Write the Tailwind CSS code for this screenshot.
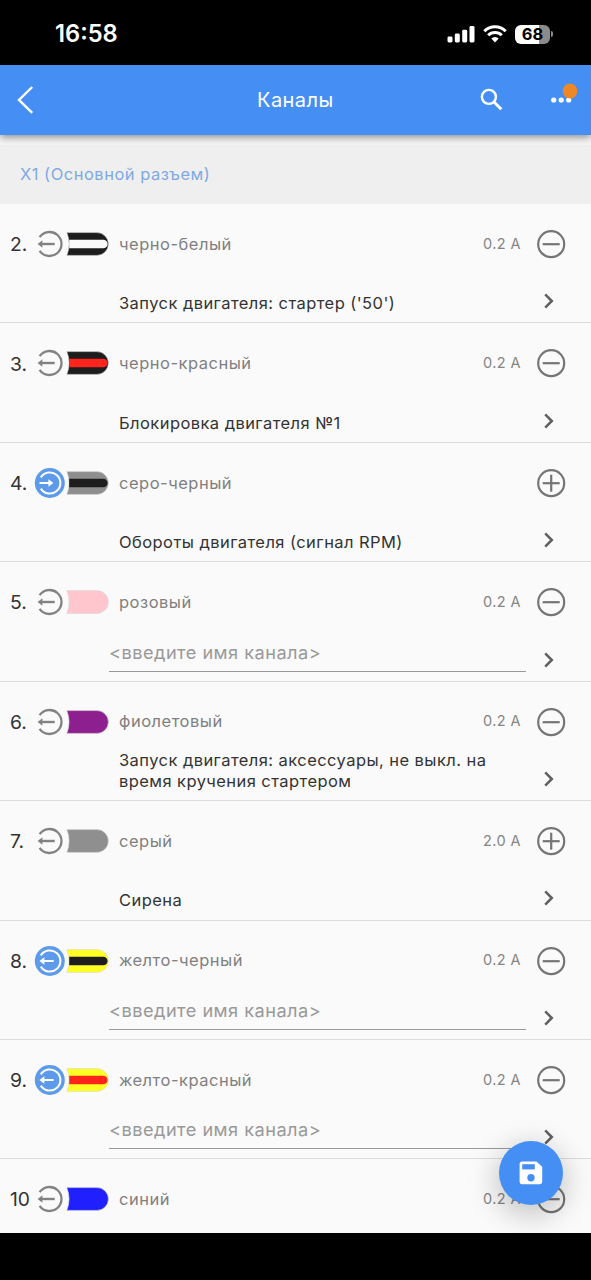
<!DOCTYPE html>
<html lang="ru">
<head>
<meta charset="utf-8">
<title>Каналы</title>
<script src="https://cdn.jsdelivr.net/npm/@tailwindcss/browser@4"></script>
</head>
<body class="w-[591px] h-[1280px] overflow-hidden bg-black font-['Inter',sans-serif]">
<div class="relative flex flex-col w-[591px] h-[1280px]">
  <div class="h-[65px] shrink-0 bg-black text-white flex items-center pt-[3px] pl-[55px] pr-[38px]">
    <span class="text-[23.7px] font-semibold leading-none">16:58</span>
    <div class="ml-auto flex items-center">
      <svg class="w-[28px] h-[18px]" viewBox="0 0 28 18" fill="#fff"><rect x="0.5" y="11.5" width="5" height="6" rx="1.4"/><rect x="7.8" y="8.5" width="5" height="9" rx="1.4"/><rect x="15.2" y="4.8" width="5" height="12.7" rx="1.4"/><rect x="22.5" y="1" width="5" height="16.5" rx="1.4"/></svg>
      <svg class="w-[24px] h-[18px] ml-[8px]" viewBox="0 0 24 18" fill="none" stroke="#fff" stroke-width="3"><path d="M1.3 6.2a15 15 0 0 1 21.4 0M5.2 10.2a9.6 9.6 0 0 1 13.6 0"/><path d="M12 17.4l-3.7-3.8a5.3 5.3 0 0 1 7.4 0z" fill="#fff" stroke="none"/></svg>
      <div class="ml-[8px] w-[35px] h-[19px] rounded-[6px] flex items-center justify-center bg-linear-to-r from-white from-68% to-[#8b8b8b] to-68% text-black text-[16.5px] font-bold leading-none">68</div>
      <div class="ml-[1px] w-[2px] h-[6px] rounded-r bg-[#8b8b8b]"></div>
    </div>
  </div>
  <header class="relative z-10 h-[70px] shrink-0 bg-[#458ff4] text-white flex items-center shadow-[0_2px_8px_rgba(0,0,0,0.45)]">
    <svg class="w-[18px] h-[30px] ml-[16px]" viewBox="0 0 18 30" fill="none" stroke="#fff" stroke-width="2.4"><path d="M16.2 2L3 14.9l13.2 13"/></svg>
    <h1 class="w-[76px] ml-[223px] text-[20px] tracking-[0.45px] leading-none whitespace-nowrap">Каналы</h1>
    <svg class="w-[24px] h-[24px] ml-[147px]" viewBox="0 0 24 24" fill="none" stroke="#fff"><circle cx="8.9" cy="8.9" r="7" stroke-width="2.4"/><path d="M14 14l7.3 7.3" stroke-width="3"/></svg>
    <svg class="w-[30px] h-[34px] ml-[46px]" viewBox="0 0 30 34" fill="#fff"><circle cx="3.7" cy="17" r="2.6"/><circle cx="11.2" cy="17" r="2.6"/><circle cx="18.7" cy="17" r="2.6"/><circle cx="20" cy="8" r="7.4" fill="#ee8725"/></svg>
  </header>
  <div class="h-[69px] shrink-0 bg-[#efefef] border-t-[10px] border-[#f6f6f6] flex items-center pl-[20px] text-[#7fa9e2] text-[16.5px] tracking-[0.5px] leading-none"><span>X1 (Основной разъем)</span></div>
  <main id="rows" class="h-[1029px] shrink-0 overflow-hidden bg-[#fafafa]"></main>
  <button class="absolute z-20 left-[499px] top-[1141px] w-[64px] h-[64px] rounded-full bg-[#458ff4] flex items-center justify-center shadow-[0_8px_28px_4px_rgba(0,0,0,0.2)]">
    <svg class="w-[24px] h-[24px]" viewBox="0 0 24 24"><path d="M3.2.6h14.2l5.8 5.2v14.8a2.6 2.6 0 0 1-2.6 2.6H3.2a2.6 2.6 0 0 1-2.6-2.6V3.2A2.6 2.6 0 0 1 3.2.6z" fill="#fff"/><rect x="3.2" y="3.2" width="12.6" height="5.2" fill="#458ff4"/><circle cx="12" cy="16.8" r="3.7" fill="#458ff4"/></svg>
  </button>
  <div class="relative z-30 h-[47px] shrink-0 bg-black"></div>
</div>
<script>
const channels = [
  {n:'2.', c:'#1d1d1d', s:'#fafafa', name:'черно-белый', amp:'0.2 A', sign:'-', text:"Запуск двигателя: стартер ('50')"},
  {n:'3.', c:'#1d1d1d', s:'#ff251d', name:'черно-красный', amp:'0.2 A', sign:'-', text:'Блокировка двигателя №1'},
  {n:'4.', c:'#8e8e8e', s:'#1d1d1d', name:'серо-черный', amp:'', sign:'+', on:1, dir:'in', text:'Обороты двигателя (сигнал RPM)'},
  {n:'5.', c:'#ffc6ce', name:'розовый', amp:'0.2 A', sign:'-'},
  {n:'6.', c:'#8d1f8f', name:'фиолетовый', amp:'0.2 A', sign:'-', text:'Запуск двигателя: аксессуары, не выкл. на<br>время кручения стартером'},
  {n:'7.', c:'#8f8f8f', name:'серый', amp:'2.0 A', sign:'+', text:'Сирена'},
  {n:'8.', c:'#ffff24', s:'#1d1d1d', name:'желто-черный', amp:'0.2 A', sign:'-', on:1},
  {n:'9.', c:'#ffff24', s:'#ff251d', name:'желто-красный', amp:'0.2 A', sign:'-', on:1},
  {n:'10', c:'#2020ff', name:'синий', amp:'0.2 A', sign:'-', text:''}
];
const direction = r => {
  if (!r.on) return '<g fill="none" stroke="#828282" stroke-width="2.3"><path d="M5.6 9.2A12 12 0 1 1 5.6 22.8"/><path d="M7 16H20.7" stroke-width="2.4"/><path d="M3.6 16l4.8-3.8v7.6z" fill="#828282" stroke="none"/></g>';
  const arrow = r.dir === 'in'
    ? '<path d="M5.5 16H16"/><path d="M19.4 16l-5-3.7v7.4z" fill="#fff" stroke="none"/>'
    : '<path d="M9 16H19.7"/><path d="M5.4 16l5-3.7v7.4z" fill="#fff" stroke="none"/>';
  return '<circle cx="15.8" cy="16" r="15" fill="#5d9aea"/><g fill="none" stroke="#fff" stroke-width="2"><path d="M6.8 10.4A10.6 10.6 0 1 1 6.8 21.6"/>' + arrow + '</g>';
};
const wire = r => `<path d="M32.8 4.6H63A11.4 11.4 0 0 1 63 27.4H32.8Q37.4 16 32.8 4.6z" fill="${r.c}" stroke="#d8d8d8" stroke-width="0.6"/>` +
  (r.s ? `<path d="M35.2 11.7H69.3A4.3 4.3 0 0 1 69.3 20.3H35.2z" fill="${r.s}"/>` : '');
document.getElementById('rows').innerHTML = channels.map(r => `
<section class="h-[119.43px] border-b-[1.5px] border-[#dcdcdc] flex flex-col">
  <div class="h-[80px] shrink-0 flex items-center pl-[10px] pr-[25px]">
    <span class="w-[24px] pt-[1.5px] text-[19.3px] text-[#333] leading-none whitespace-nowrap">${r.n}</span>
    <svg class="w-[76px] h-[32px] shrink-0" viewBox="0 0 76 32">${direction(r)}${wire(r)}</svg>
    <span class="ml-[9px] text-[16.5px] tracking-[0.5px] text-[#808080] leading-none whitespace-nowrap">${r.name}</span>
    <span class="ml-auto mr-[15px] text-[14.5px] tracking-[0.4px] text-[#858585] leading-none">${r.amp}</span>
    <svg class="w-[30px] h-[30px] shrink-0" viewBox="0 0 30 30" fill="none" stroke="#757575" stroke-width="2.2"><circle cx="15.2" cy="15.2" r="13"/><path d="M6.7 15.2H23.7"/>${r.sign === '+' ? '<path d="M15.2 6.7V23.7"/>' : ''}</svg>
  </div>
  <div class="h-[38px] shrink-0 flex items-end pr-[36px]">
    ${r.text === undefined
      ? '<div class="ml-[109px] w-[417px] h-[39px] mb-[8.5px] border-b border-[#999] text-[18.2px] tracking-[0.46px] text-[#999] leading-[39px] whitespace-nowrap">&lt;введите имя канала&gt;</div>'
      : `<p class="ml-[119px] mb-[7.5px] text-[16.5px] tracking-[0.43px] leading-[21.3px] text-[#333] whitespace-nowrap">${r.text}</p>`}
    <svg class="ml-auto mb-[11.7px] w-[12px] h-[18px] shrink-0" viewBox="0 0 12 18" fill="none" stroke="#606060" stroke-width="2.5"><path d="M2.2 2.4L8.8 9 2.2 15.6"/></svg>
  </div>
</section>`).join('');
</script>
</body>
</html>
